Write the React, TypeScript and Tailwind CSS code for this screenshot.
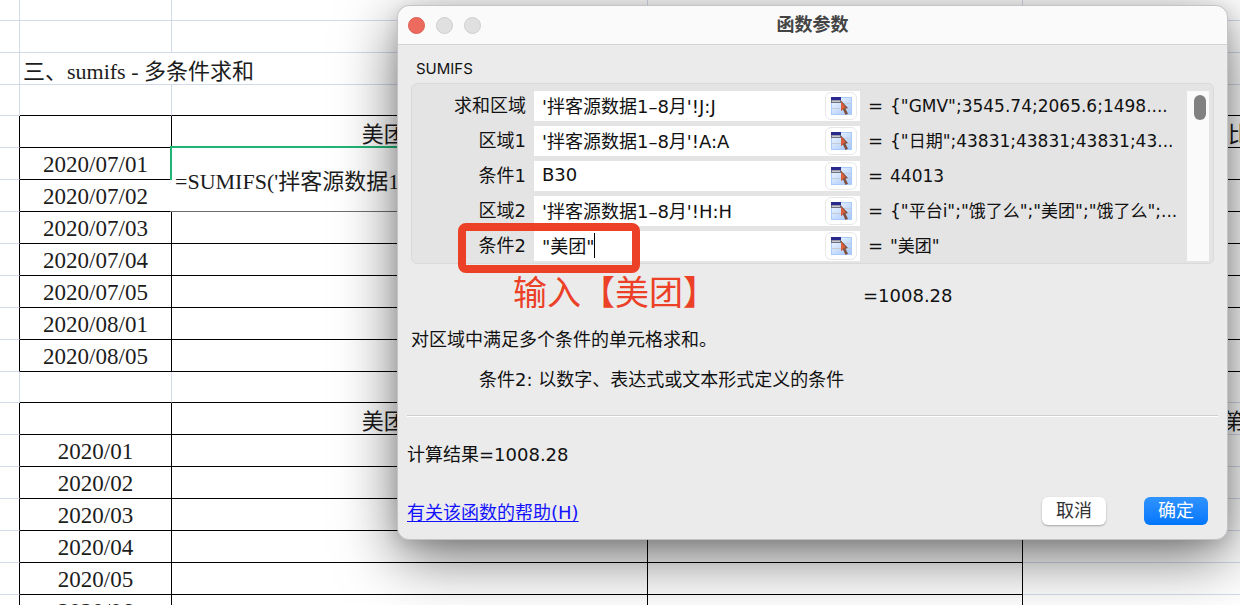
import { useState } from "react";
import clsx from "clsx";

type Row = {
  kind: "top" | "blank" | "gap" | "title" | "head" | "data";
  label?: string;
  amount?: string;
  extra?: string;
  short?: boolean;
};

const rows: Row[] = [
  { kind: "top" },
  { kind: "blank" },
  { kind: "title", label: "三、sumifs - 多条件求和" },
  { kind: "gap" },
  { kind: "head", amount: "美团GMV", extra: "比" },
  { kind: "data", label: "2020/07/01" },
  { kind: "data", label: "2020/07/02" },
  { kind: "data", label: "2020/07/03" },
  { kind: "data", label: "2020/07/04" },
  { kind: "data", label: "2020/07/05" },
  { kind: "data", label: "2020/08/01" },
  { kind: "data", label: "2020/08/05" },
  { kind: "gap" },
  { kind: "head", amount: "美团GMV", extra: "第", short: true },
  { kind: "data", label: "2020/01", short: true },
  { kind: "data", label: "2020/02", short: true },
  { kind: "data", label: "2020/03", short: true },
  { kind: "data", label: "2020/04", short: true },
  { kind: "data", label: "2020/05", short: true },
  { kind: "data", label: "2020/06", short: true },
];

const params = [
  {
    label: "求和区域",
    value: "'拌客源数据1–8月'!J:J",
    result: '{"GMV";3545.74;2065.6;1498....',
  },
  {
    label: "区域1",
    value: "'拌客源数据1–8月'!A:A",
    result: '{"日期";43831;43831;43831;43...',
  },
  { label: "条件1", value: "B30", result: "44013" },
  {
    label: "区域2",
    value: "'拌客源数据1–8月'!H:H",
    result: '{"平台i";"饿了么";"美团";"饿了么";...',
  },
  { label: "条件2", value: '"美团"', result: '"美团"' },
];

function Sheet() {
  return (
    <table className="w-full table-fixed border-separate border-spacing-0 font-['Liberation_Serif','Noto_Sans_CJK_SC',serif] text-[22px] leading-6 text-[#1c1c1c]">
      <colgroup>
        <col className="w-5" />
        <col className="w-[152px]" />
        <col className="w-[476px]" />
        <col className="w-[375px]" />
        <col />
      </colgroup>
      <tbody>
        {rows.map((row, i) => {
          const boxed = row.kind === "head" || row.kind === "data";
          const next = rows[i + 1];
          const lineBelow = boxed || next?.kind === "head";
          const wideLineBelow = lineBelow && !row.short && !next?.short;
          const cell = clsx(
            "border-b px-0 pb-0 whitespace-nowrap",
            row.kind === "top" && "h-[21px]",
            row.kind === "gap" && "h-[31px]",
            row.kind === "blank" && "h-8",
            row.kind === "data" && "h-8 pt-[3px]",
            (row.kind === "head" || row.kind === "title") && "h-8 pt-[6px]",
          );
          const inner = clsx(
            cell,
            "border-r",
            lineBelow ? "border-b-black" : "border-b-[#d3daea]",
            boxed ? "border-r-black" : "border-r-[#d3daea]",
          );
          return (
            <tr key={i}>
              <td
                className={clsx(
                  cell,
                  "border-r border-b-[#d3daea]",
                  boxed ? "border-r-black" : "border-r-[#d3daea]",
                )}
              />
              {row.kind === "title" ? (
                <td colSpan={3} className={clsx(inner, "pl-[3px]")}>
                  {row.label}
                </td>
              ) : (
                <>
                  <td className={clsx(inner, "text-center text-[23px]")}>
                    {row.label}
                  </td>
                  <td className={clsx(inner, "relative text-center")}>
                    {row.amount}
                    {row.label === "2020/07/01" && (
                      <div className="absolute -top-0.5 -left-0.5 z-10 h-[66px] w-[400px] border-t-2 border-b border-t-[#21b573] border-b-[#6b706b] bg-white pt-[22px] pl-[5px] text-left">
                        <span className="absolute top-0 left-0 h-8 w-0.5 bg-[#21b573]" />
                        =SUMIFS('拌客源数据1-8月'!
                      </div>
                    )}
                  </td>
                  <td className={inner} />
                </>
              )}
              <td
                className={clsx(
                  cell,
                  row.short ? "pl-[200px]" : "pl-[205px]",
                  wideLineBelow ? "border-b-black" : "border-b-[#d3daea]",
                )}
              >
                {row.extra}
              </td>
            </tr>
          );
        })}
      </tbody>
    </table>
  );
}

function PickerIcon() {
  return (
    <svg width="21" height="18" viewBox="0 0 21 18" aria-hidden="true">
      <defs>
        <linearGradient id="cells" x1="0" y1="0" x2="1" y2="1">
          <stop offset="0" stopColor="#f4f9ff" />
          <stop offset="1" stopColor="#a3c6fb" />
        </linearGradient>
      </defs>
      <rect width="21" height="18" fill="#a9cbfa" />
      <rect x="1" y="1" width="19" height="16" fill="url(#cells)" />
      <path d="M1 11.5h19M11 6.5h9" stroke="#c5cbd4" />
      <rect width="10" height="6" fill="#6d6f7c" />
      <rect width="10" height="3" fill="#29298d" />
      <rect x="1" y="3.5" width="8" height="1.5" fill="#c9cad1" />
      <path d="M10 3.500v10.500l2-1.500 2.500 5.500 2.500-1.200-2.500-5 2.500-.8z" fill="#80503f" />
      <path d="M10 4.500v9.500l2.500-2.500 2-1.500z" fill="#dc5f3c" />
    </svg>
  );
}

function ParamRow({ index }: { index: number }) {
  const { label, value, result } = params[index];
  const [text, setText] = useState(value);
  const last = index === params.length - 1;
  return (
    <div className="flex h-[30px] items-center">
      <label htmlFor={`param-${index}`} className="w-[114px] text-right">
        {label}
      </label>
      <div className="relative ml-2 flex h-full w-[326px] items-center bg-white pr-[3px]">
        <input
          id={`param-${index}`}
          type="text"
          value={text}
          onChange={(e) => setText(e.target.value)}
          className="h-full min-w-0 flex-1 bg-transparent pb-[3px] pl-2 outline-none"
        />
        {last && (
          <span className="absolute top-0.5 left-[60px] h-[25px] w-px bg-black" />
        )}
        <button
          type="button"
          aria-label="选择区域"
          className="flex h-7 w-8 items-center justify-center rounded-md border border-[#e8e8e8] bg-white"
        >
          <PickerIcon />
        </button>
      </div>
      <span className="ml-2 w-[22px]">=</span>
      <span className="min-w-0 flex-1 text-[17px] whitespace-nowrap">
        {result}
      </span>
    </div>
  );
}

function Dialog() {
  return (
    <div
      role="dialog"
      aria-labelledby="dialog-title"
      className="absolute top-[5px] right-3 left-[397px] z-20 rounded-xl border border-[#c4c4c4] bg-[#ebebeb] font-['DejaVu_Sans','Noto_Sans_CJK_SC',sans-serif] text-lg leading-6 text-[#111] shadow-[0_18px_60px_rgba(0,0,0,0.55),0_4px_16px_rgba(0,0,0,0.12)]"
    >
      <div className="relative flex h-[39px] items-center justify-center rounded-t-xl border-b border-[#d2d2d2] bg-[#fafafa]">
        <div className="absolute left-2.5 flex gap-[11px]">
          <button
            type="button"
            aria-label="关闭"
            className="size-[17px] rounded-full border border-[#df5b50] bg-[#ed6a5e]"
          />
          <span className="size-[17px] rounded-full border border-[#cfcfcf] bg-[#e0e0e0]" />
          <span className="size-[17px] rounded-full border border-[#cfcfcf] bg-[#e0e0e0]" />
        </div>
        <h1 id="dialog-title" className="font-bold text-[#444]">
          函数参数
        </h1>
      </div>

      <h2 className="flex h-[38px] items-center pt-2.5 pl-[18px] font-['Inter','Liberation_Sans',sans-serif] text-[15px]">
        SUMIFS
      </h2>

      <div className="mr-[13px] ml-[13px] flex rounded-md border border-[#dadada] bg-[#e4e4e4] pt-[7px] pr-1 pb-0.5">
        <div className="flex min-w-0 flex-1 flex-col gap-[5px]">
          {params.map((p, i) => (
            <ParamRow key={p.label} index={i} />
          ))}
        </div>
        <div className="w-[22px] bg-[#fafafa] pt-1 pl-[7px]">
          <div className="h-[25px] w-3 rounded-full bg-[#808080]" />
        </div>
      </div>

      <div className="absolute top-[217px] left-[60px] h-[50px] w-[182px] rounded-lg border-8 border-[#ec4027]" />
      <p className="absolute top-[267px] left-[115px] text-[34px] leading-10 whitespace-nowrap text-[#ec4027]">
        输入【美团】
      </p>

      <p className="mt-5 pl-[465px]">=1008.28</p>
      <p className="mt-5 pl-[13px]">对区域中满足多个条件的单元格求和。</p>
      <p className="mt-4 pl-[81px]">
        条件2: 以数字、表达式或文本形式定义的条件
      </p>
      <hr className="mt-[23px] mr-[9px] ml-[9px] h-0.5 border-t border-b border-t-[#cecece] border-b-white" />
      <p className="mt-[26px] pl-[9px]">计算结果=1008.28</p>

      <div className="mt-[30px] flex items-center pr-[19px] pb-3.5 pl-[9px]">
        <a
          href="#help"
          className="mr-auto pt-1 text-[#1212ff] underline underline-offset-2"
        >
          有关该函数的帮助(H)
        </a>
        <button
          type="button"
          className="h-7 w-16 rounded-md bg-white text-[#333] shadow-[0_1px_2px_rgba(0,0,0,0.3)]"
        >
          取消
        </button>
        <button
          type="button"
          className="ml-[38px] h-7 w-16 rounded-md bg-linear-to-b from-[#2f93ff] to-[#0076fb] text-white"
        >
          确定
        </button>
      </div>
    </div>
  );
}

export default function App() {
  return (
    <main className="relative h-screen overflow-hidden bg-white">
      <Sheet />
      <Dialog />
    </main>
  );
}
